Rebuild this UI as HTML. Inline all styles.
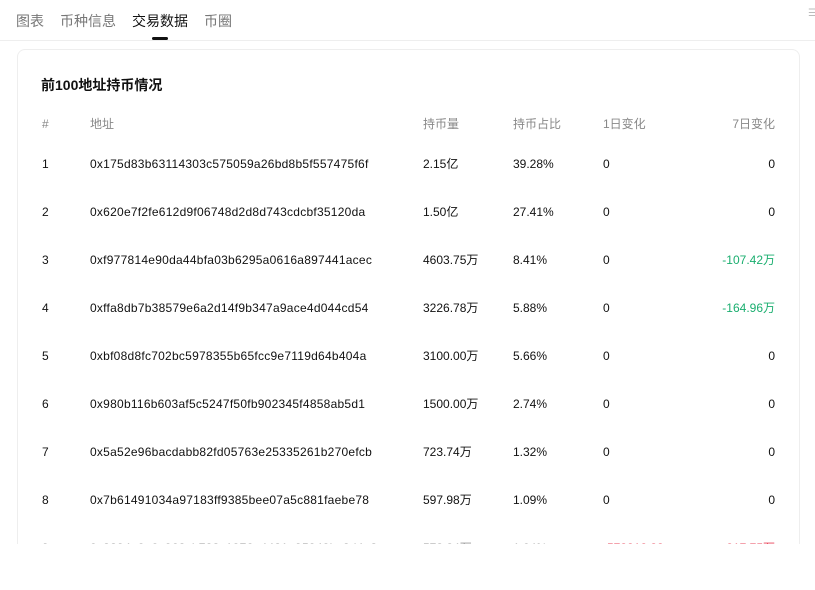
<!DOCTYPE html>
<html><head><meta charset="utf-8"><style>
body{margin:0;width:815px;height:590px;background:#fff;font-family:"Liberation Sans","Noto Sans CJK SC",sans-serif;position:relative;overflow:hidden;color:#111}
.a{position:absolute;white-space:nowrap}
.tab{top:11px;font-size:14px;color:#777}
.card{position:absolute;left:17px;top:49px;width:781px;height:494px;border:1px solid #eee;border-bottom:none;border-radius:8px 8px 0 0;overflow:hidden}
.r{position:absolute;left:0;width:781px;font-size:12px;height:14px;line-height:14px}
.r span{position:absolute;top:0;white-space:nowrap;line-height:14px;height:14px}
.ad{letter-spacing:0.25px}
.g{color:#1aae6f}.red{color:#e94359}
</style></head><body>
<div class="a tab" style="left:16px">图表</div>
<div class="a tab" style="left:60px">币种信息</div>
<div class="a tab" style="left:132px;color:#111">交易数据</div>
<div class="a tab" style="left:204px">币圈</div>
<div class="a" style="left:152px;top:37px;width:16px;height:3px;background:#111;border-radius:2px"></div>
<div class="a" style="left:0;top:40px;width:815px;height:1px;background:#eee"></div>
<div class="a" style="left:808px;top:8px;width:6px;height:12px;color:#bbb;font-size:10px">☰</div>
<div class="card">
<div class="a" style="left:23px;top:25px;font-size:14px;font-weight:bold">前100地址持币情况</div>
<div class="r" style="top:67px;color:#888"><span style="left:24px">#</span><span style="left:72px">地址</span><span style="left:405px">持币量</span><span style="left:495px">持币占比</span><span style="left:585px">1日变化</span><span style="right:24px">7日变化</span></div>
<div class="r" style="top:107px"><span style="left:24px">1</span><span class="ad" style="left:72px">0x175d83b63114303c575059a26bd8b5f557475f6f</span><span style="left:405px">2.15亿</span><span style="left:495px">39.28%</span><span style="left:585px">0</span><span style="right:24px">0</span></div>
<div class="r" style="top:155px"><span style="left:24px">2</span><span class="ad" style="left:72px">0x620e7f2fe612d9f06748d2d8d743cdcbf35120da</span><span style="left:405px">1.50亿</span><span style="left:495px">27.41%</span><span style="left:585px">0</span><span style="right:24px">0</span></div>
<div class="r" style="top:203px"><span style="left:24px">3</span><span class="ad" style="left:72px">0xf977814e90da44bfa03b6295a0616a897441acec</span><span style="left:405px">4603.75万</span><span style="left:495px">8.41%</span><span style="left:585px">0</span><span style="right:24px" class="g">-107.42万</span></div>
<div class="r" style="top:251px"><span style="left:24px">4</span><span class="ad" style="left:72px">0xffa8db7b38579e6a2d14f9b347a9ace4d044cd54</span><span style="left:405px">3226.78万</span><span style="left:495px">5.88%</span><span style="left:585px">0</span><span style="right:24px" class="g">-164.96万</span></div>
<div class="r" style="top:299px"><span style="left:24px">5</span><span class="ad" style="left:72px">0xbf08d8fc702bc5978355b65fcc9e7119d64b404a</span><span style="left:405px">3100.00万</span><span style="left:495px">5.66%</span><span style="left:585px">0</span><span style="right:24px">0</span></div>
<div class="r" style="top:347px"><span style="left:24px">6</span><span class="ad" style="left:72px">0x980b116b603af5c5247f50fb902345f4858ab5d1</span><span style="left:405px">1500.00万</span><span style="left:495px">2.74%</span><span style="left:585px">0</span><span style="right:24px">0</span></div>
<div class="r" style="top:395px"><span style="left:24px">7</span><span class="ad" style="left:72px">0x5a52e96bacdabb82fd05763e25335261b270efcb</span><span style="left:405px">723.74万</span><span style="left:495px">1.32%</span><span style="left:585px">0</span><span style="right:24px">0</span></div>
<div class="r" style="top:443px"><span style="left:24px">8</span><span class="ad" style="left:72px">0x7b61491034a97183ff9385bee07a5c881faebe78</span><span style="left:405px">597.98万</span><span style="left:495px">1.09%</span><span style="left:585px">0</span><span style="right:24px">0</span></div>
<div class="r" style="top:491px;color:#999"><span style="left:24px">9</span><span class="ad" style="left:72px">0x8894e0a0c962cb723c1976a4421a95949bc2d4a3</span><span style="left:405px">573.84万</span><span style="left:495px">1.04%</span><span style="left:585px" class="red">-573812.38</span><span style="right:24px" class="red">-217.75万</span></div>
</div>
</body></html>
